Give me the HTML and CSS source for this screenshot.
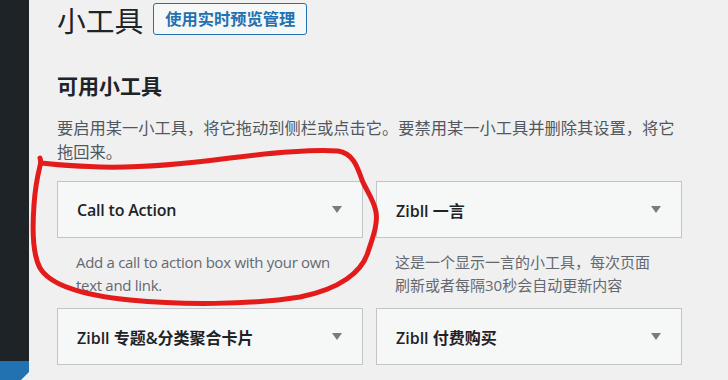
FILE: index.html
```html
<!DOCTYPE html>
<html lang="zh-CN">
<head>
<meta charset="utf-8">
<link rel="stylesheet" href="styles.css">
</head>
<body>
<div class="sidebar">
  <div class="current"></div>
</div>
<main class="main">
  <div class="header">
    <h1 class="title">小工具</h1>
    <a class="btn">使用实时预览管理</a>
  </div>
  <h2 class="subtitle">可用小工具</h2>
  <p class="desc">要启用某一小工具，将它拖动到侧栏或点击它。要禁用某一小工具并删除其设置，将它拖回来。</p>
  <div class="widgets">
    <div class="widget">
      <div class="card"><span class="name en">Call to Action</span><span class="arrow"></span></div>
      <p class="wdesc en">Add a call to action box with your own text and link.</p>
    </div>
    <div class="widget">
      <div class="card"><span class="name">Zibll 一言</span><span class="arrow"></span></div>
      <p class="wdesc">这是一个显示一言的小工具，每次页面刷新或者每隔30秒会自动更新内容</p>
    </div>
    <div class="widget last">
      <div class="card"><span class="name">Zibll 专题&amp;分类聚合卡片</span><span class="arrow"></span></div>
    </div>
    <div class="widget last">
      <div class="card"><span class="name">Zibll 付费购买</span><span class="arrow"></span></div>
    </div>
  </div>
</main>
<svg class="scribble" width="728" height="380" viewBox="0 0 728 380">
  <path d="M40,158 C41,161 41,163 40,166 C37,178 35,190 34,205 C32,232 33,255 40,268 C50,285 80,295 130,300 C180,305 250,305 300,297 C340,289 362,272 368,252 C373,237 378,224 376,212 C374,200 366,190 362,180 C357,165 352,153 338,151 C310,149 270,153 230,158 C185,164 140,168 100,167 C75,166 55,165 42,163" fill="none" stroke="#e41b1b" stroke-width="5" stroke-linecap="round" stroke-linejoin="round"/>
</svg>
</body>
</html>
```
FILE: styles.css
```css
html, body {
  margin: 0;
  padding: 0;
}
body {
  width: 728px;
  height: 380px;
  overflow: hidden;
  background: #f0f0f1;
  display: flex;
  font-family: "Open Sans", "Noto Sans CJK SC", sans-serif;
  color: #1d2327;
  position: relative;
}
.sidebar {
  width: 29px;
  flex: none;
  height: 380px;
  background: #1d2327;
  display: flex;
  flex-direction: column;
  justify-content: flex-end;
}
.current {
  height: 19px;
  background: #2271b1;
  position: relative;
}
.current::after {
  content: "";
  position: absolute;
  right: 0;
  bottom: 0;
  width: 0;
  height: 0;
  border-style: solid;
  border-width: 0 0 8px 8px;
  border-color: transparent transparent #f0f0f1 transparent;
}
.main {
  flex: 1;
  padding: 3px 0 0 28px;
  height: 377px;
  overflow: hidden;
}
.header {
  display: flex;
  align-items: flex-start;
  height: 32px;
}
.title {
  margin: 0;
  font-size: 28.75px;
  font-weight: 400;
  line-height: 36px;
  height: 32px;
  color: #1d2327;
}
.btn {
  margin-left: 10px;
  box-sizing: border-box;
  height: 32px;
  padding: 0 11px;
  border: 1px solid #2271b1;
  border-radius: 3px;
  background: #f6f7f7;
  color: #2271b1;
  font-size: 16.25px;
  font-weight: 600;
  line-height: 30px;
}
.subtitle {
  margin: 36px 0 0;
  font-size: 21px;
  font-weight: 700;
  line-height: 30px;
}
.desc {
  margin: 15px 0 0;
  width: 625px;
  font-size: 16.25px;
  line-height: 24px;
  color: #50575e;
}
.widgets {
  margin-top: 17px;
  display: grid;
  grid-template-columns: 306px 306px;
  column-gap: 13px;
  align-items: start;
}
.widget {
  height: 127px;
}
.widget.last {
  height: auto;
}
.card {
  box-sizing: border-box;
  height: 57px;
  border: 1px solid #c3c4c7;
  background: #f6f7f7;
  display: flex;
  align-items: center;
  justify-content: space-between;
  padding: 0 20px 0 19px;
}
.name {
  font-size: 16px;
  font-weight: 600;
  color: #1d2327;
}
.name.en {
  letter-spacing: -0.2px;
}
.arrow {
  width: 0;
  height: 0;
  border-style: solid;
  border-width: 7px 5px 0 5px;
  border-color: #787c82 transparent transparent transparent;
}
.wdesc {
  margin: 13px 0 0;
  padding: 0 20px 0 19px;
  font-size: 15px;
  line-height: 23px;
  color: #646970;
}
.wdesc.en {
  letter-spacing: -0.3px;
}
.scribble {
  position: absolute;
  left: 0;
  top: 0;
  pointer-events: none;
}
```
